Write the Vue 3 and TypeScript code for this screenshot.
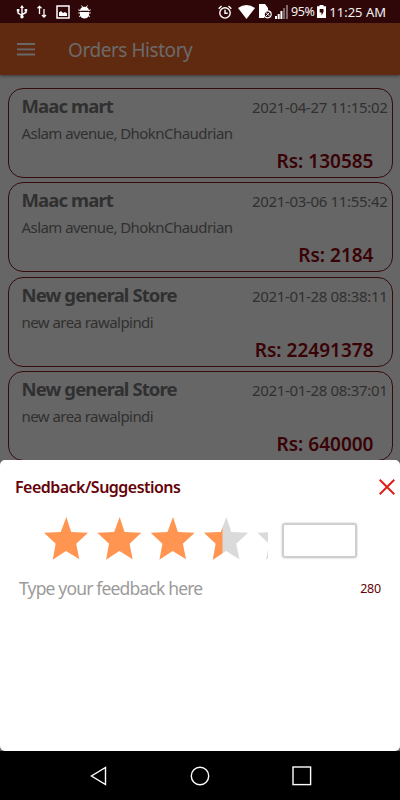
<script setup lang="ts">
interface Order {
  store: string
  address: string
  date: string
  total: string
}

const orders: Order[] = [
  { store: 'Maac mart', address: 'Aslam avenue, DhoknChaudrian', date: '2021-04-27 11:15:02', total: 'Rs: 130585' },
  { store: 'Maac mart', address: 'Aslam avenue, DhoknChaudrian', date: '2021-03-06 11:55:42', total: 'Rs: 2184' },
  { store: 'New general Store', address: 'new area rawalpindi', date: '2021-01-28 08:38:11', total: 'Rs: 22491378' },
  { store: 'New general Store', address: 'new area rawalpindi', date: '2021-01-28 08:37:01', total: 'Rs: 640000' },
]

const starPoints = '22.3,0 27.2,15 44,15.7 32.2,26.7 35.3,42.3 22,34 8.7,42.7 11.7,26.7 0,15.7 16.8,15'
</script>

<template>
  <div class="phone">
    <div class="status">
      <div class="left-icons">
        <svg width="12" height="14" viewBox="0 0 12 14" fill="none" stroke="#fff" stroke-width="1.4">
          <path d="M6 2v9M2 5v3l4 2.500M10 5v2.500L6 9.500" />
          <path d="M6 0 8 3H4zM.8 4h2.600v2.400H.8zM8.600 4h2.600v2.400H8.600z" fill="#fff" stroke="none" />
          <circle cx="6" cy="11.700" r="1.700" fill="#fff" stroke="none" />
        </svg>
        <svg width="10" height="13" viewBox="0 0 10 13" fill="none" stroke="#fff" stroke-width="1.300">
          <path d="M2.500 9V1.200M.5 3.300l2-2 2 2M7 4v8M5 10l2 2 2-2" />
        </svg>
        <svg width="14" height="14" viewBox="0 0 14 14">
          <rect x="1" y="1" width="12" height="12" fill="none" stroke="#fff" stroke-width="1.500" />
          <path d="M3 11V7.500L5 6l2 2 2-1 2 1.500V11z" fill="#fff" />
        </svg>
        <svg width="13" height="14" viewBox="0 0 13 14" fill="#fff">
          <path d="M2 5.800C2 3.200 4 1.700 6.500 1.700S11 3.200 11 5.800zM2 7h9v2.500c0 5.300-9 5.300-9 0z" />
          <path d="M3.500.5l1.500 2M9.500.5l-1.500 2M.3 4.800l2.400 1M12.700 4.800l-2.400 1M.3 8h12.400M1 11.500l2-1M12 11.500l-2-1" stroke="#fff" />
        </svg>
      </div>
      <div class="right-icons">
        <svg width="14" height="14" viewBox="0 0 14 14" fill="none" stroke="#fff" stroke-width="1.400">
          <circle cx="7" cy="7.900" r="5.200" />
          <path d="M7 4.800v3.400h2.700M.7 3.700 3.500 1M13.300 3.700 10.500 1" />
        </svg>
        <svg class="wifi" width="17" height="14" viewBox="0 0 17 14"><path d="M0 3Q8.500-3 17 3L8.500 14z" fill="#fff" /></svg>
        <svg class="sim" width="13" height="15" viewBox="0 0 13 15">
          <path d="M0 0h6l3 4v4L5 14H0z" fill="#fff" />
          <circle cx="8.700" cy="10.300" r="3.500" fill="#300709" stroke="#fff" stroke-width="1.200" />
          <path d="M6.500 8l4.500 4.600M7 12l3.500-3.500" stroke="#fff" />
        </svg>
        <svg class="signal" width="13" height="14" viewBox="0 0 13 14" fill="#fff">
          <path d="M0 11h2v3H0zM2.700 9h2v5h-2zM5.400 6h2v8h-2z" />
          <path d="M8.100 3h2v11h-2zM11 0h2v14h-2z" opacity=".4" />
        </svg>
        <span class="battery-text">95%</span>
        <svg class="battery" width="9" height="13" viewBox="0 0 9 13">
          <path d="M0 1.300h2.500V0h4v1.300H9V13H0z" fill="#fff" />
          <path d="M2.700 4h3.800v3L4.500 10.500V7.500H2.700z" fill="#300709" />
        </svg>
        <span class="clock">11:25 AM</span>
      </div>
    </div>
    <header class="appbar">
      <svg width="18" height="13" viewBox="0 0 18 13"><path d="M0 1h18M0 6.300h18M0 11.500h18" stroke="#686868" stroke-width="1.800" /></svg>
      <h1>Orders History</h1>
    </header>
    <main class="orders">
      <article v-for="order in orders" :key="order.date" class="card">
        <div class="top">
          <h2>{{ order.store }}</h2>
          <time>{{ order.date }}</time>
        </div>
        <p class="address">{{ order.address }}</p>
        <p class="total">{{ order.total }}</p>
      </article>
    </main>
    <section class="sheet">
      <div class="sheet-head">
        <h3>Feedback/Suggestions</h3>
        <svg width="16" height="16" viewBox="0 0 16 16"><path d="M.7.7l14.600 14.600M15.300.7.7 15.300" stroke="#dc2118" stroke-width="2" /></svg>
      </div>
      <div class="rating">
        <svg width="224" height="43" viewBox="0 0 224 43">
          <defs><clipPath id="rated"><rect width="178.500" height="43" /></clipPath></defs>
          <g fill="#dadada">
            <polygon v-for="i in [3, 4]" :key="i" :points="starPoints" :transform="`translate(${i * 53.35} 0)`" />
          </g>
          <g fill="#ff9551" clip-path="url(#rated)">
            <polygon v-for="i in [0, 1, 2, 3]" :key="i" :points="starPoints" :transform="`translate(${i * 53.35} 0)`" />
          </g>
        </svg>
        <div class="score"></div>
      </div>
      <div class="message">
        <span class="placeholder">Type your feedback here</span>
        <span class="count">280</span>
      </div>
    </section>
    <nav class="navbar">
      <svg width="17" height="20" viewBox="0 0 17 20"><path d="M15.500 1.500v17L1.500 10z" /></svg>
      <svg width="20" height="20" viewBox="0 0 20 20"><circle cx="10" cy="10" r="8.700" /></svg>
      <svg width="20" height="20" viewBox="0 0 20 20"><rect x="1" y="1" width="17.600" height="17.600" /></svg>
    </nav>
  </div>
</template>

<style>
body { margin: 0; background: #666; }
</style>

<style scoped>
* { box-sizing: border-box; }
h1, h2, h3, p { margin: 0; }
svg { display: block; flex: none; }
.phone {
  width: 400px;
  height: 800px;
  display: flex;
  flex-direction: column;
  overflow: hidden;
  background: #666;
  font-family: "Noto Sans", "Open Sans", sans-serif;
  white-space: nowrap;
}
.status {
  height: 23px;
  flex: none;
  display: flex;
  justify-content: space-between;
  padding: 0 14px 0 16px;
  background: #300709;
  color: #f4f0f0;
  font-size: 12.5px;
}
.left-icons, .right-icons { display: flex; align-items: center; }
.left-icons { gap: 9px; }
.left-icons svg:nth-child(4) { margin-left: -1px; }
.wifi { margin-left: 6px; }
.sim { margin-left: 4px; }
.signal { margin-left: 3px; }
.battery-text { margin-left: 3px; letter-spacing: -0.5px; }
.battery { margin-left: 3px; }
.clock { margin-left: 3px; font-size: 13px; }
.appbar {
  height: 52px;
  flex: none;
  display: flex;
  align-items: center;
  gap: 33px;
  padding-left: 17px;
  background: #602a10;
  box-shadow: 0 1px 3px rgba(0, 0, 0, 0.45);
  color: #6b6b6b;
}
h1 { font-size: 19px; line-height: 26px; font-weight: 400; letter-spacing: -0.45px; padding-top: 1px; }
.orders {
  height: 385px;
  flex: none;
  padding: 12.5px 7.5px 0 7.5px;
  display: flex;
  flex-direction: column;
  gap: 4.5px;
  overflow: hidden;
  color: #303030;
}
.card {
  height: 90px;
  flex: none;
  padding: 4px 4px 0 13px;
  border: 1px solid #360b0e;
  border-radius: 15px;
}
.top { display: flex; justify-content: space-between; line-height: 26px; }
h2 { font-size: 18.5px; font-weight: 700; letter-spacing: -0.88px; }
time { font-size: 15px; letter-spacing: -0.33px; padding-top: 1px; }
.address { font-size: 15px; line-height: 22px; padding-top: 2px; letter-spacing: -0.55px; }
.total {
  padding: 4px 14px 0 0;
  color: #390306;
  font-size: 19px;
  font-weight: 600;
  line-height: 26px;
  text-align: right;
}
.sheet {
  height: 291px;
  flex: none;
  border-radius: 5px;
  background: #fff;
}
.sheet-head {
  display: flex;
  justify-content: space-between;
  align-items: center;
  padding: 14px 5px 0 15px;
  color: #650207;
}
h3 { font-size: 16px; line-height: 25px; font-weight: 600; letter-spacing: -0.52px; padding-top: 1px; margin-bottom: -1px; }
.rating { display: flex; align-items: center; padding: 18px 0 0 44px; }
.score {
  width: 75px;
  height: 35px;
  margin: 4px 0 0 14px;
  border: 2px solid #cfcfcf;
  border-radius: 3px;
  box-shadow: 0 0 2px #bbb;
}
.message {
  display: flex;
  justify-content: space-between;
  align-items: center;
  padding: 13px 19px 0 19px;
  line-height: 26px;
}
.placeholder { color: #9b9b9b; font-size: 17.5px; letter-spacing: -0.83px; }
.count { padding-top: 3px; color: #650207; font-size: 12.5px; letter-spacing: -0.2px; }
.navbar {
  height: 49px;
  flex: none;
  display: flex;
  align-items: center;
  gap: 82.5px;
  padding-left: 89.5px;
  background: #000;
}
.navbar svg { fill: none; stroke: #fff; stroke-width: 1.4; }
.navbar svg:nth-child(2) { margin-left: 0.5px; }
</style>
